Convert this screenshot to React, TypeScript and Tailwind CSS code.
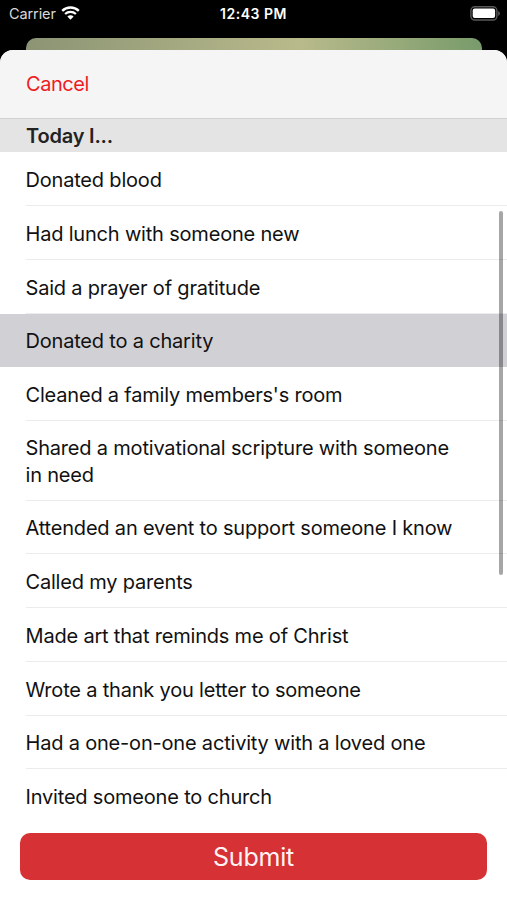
import React from 'react';

const items = [
  { label: 'Donated blood' },
  { label: 'Had lunch with someone new' },
  { label: 'Said a prayer of gratitude' },
  { label: 'Donated to a charity', selected: true },
  { label: "Cleaned a family members's room" },
  { label: 'Shared a motivational scripture with someone in need', tall: true },
  { label: 'Attended an event to support someone I know' },
  { label: 'Called my parents' },
  { label: 'Made art that reminds me of Christ' },
  { label: 'Wrote a thank you letter to someone' },
  { label: 'Had a one-on-one activity with a loved one' },
  { label: 'Invited someone to church', last: true },
];

function WifiIcon() {
  return (
    <svg className="ml-[5px] -mt-px w-[19px] h-[14px]" viewBox="0 0 19 14" fill="none">
      <path d="M1.2 4.9a12 12 0 0 1 16.6 0" stroke="#fff" strokeWidth="2.4" />
      <path d="M4.1 8a7.8 7.8 0 0 1 10.8 0" stroke="#fff" strokeWidth="2.3" />
      <path d="M9.5 13.8 6.4 10.6a4.4 4.4 0 0 1 6.2 0Z" fill="#fff" />
    </svg>
  );
}

function BatteryIcon() {
  return (
    <svg className="w-[31px] h-[15px]" viewBox="0 0 31 15">
      <rect x="0.9" y="0.8" width="26" height="13.2" rx="3.8" fill="none" stroke="#59595b" strokeWidth="1.4" />
      <rect x="2.7" y="2.6" width="22.4" height="9.5" rx="2" fill="#fff" />
      <path d="M28.2 5c1.1.5 1.7 1.4 1.7 2.4s-.6 1.9-1.7 2.4Z" fill="#59595b" />
    </svg>
  );
}

function StatusBar() {
  return (
    <div className="h-[38px] grid grid-cols-3 items-start pt-[4px] text-white">
      <div className="flex items-center h-[19px] pl-[9px] text-[14.5px] tracking-[-0.1px] text-[#d8d8d8]">
        <span>Carrier</span>
        <WifiIcon />
      </div>
      <div className="h-[20px] leading-[20px] text-center text-[14px] font-semibold tracking-[0.5px]">
        12:43 PM
      </div>
      <div className="flex justify-end pt-[2px] pr-[6px]">
        <BatteryIcon />
      </div>
    </div>
  );
}

export default function App() {
  return (
    <div className="relative w-[507px] h-[900px] overflow-hidden bg-black font-['Inter',sans-serif]">
      <StatusBar />

      {/* Edge of the screen behind the sheet */}
      <div className="ml-[26px] mr-[25px] h-[12px] rounded-t-[10px] bg-linear-to-r from-[#8b9474] via-[#b9ba8b] via-60% to-[#789b6b]"></div>

      {/* Sheet */}
      <div className="h-[850px] flex flex-col rounded-t-[13px] bg-white overflow-hidden">
        <div className="shrink-0 h-[68.5px] flex items-center pl-[26px] bg-[#f5f5f5] border-b border-[#d2d2d2]">
          <button className="text-[20px] leading-[26px] tracking-[-0.45px] text-[#ee1c22]">Cancel</button>
        </div>
        <div className="shrink-0 h-[33.9px] flex items-center pl-[26px] pt-[2px] bg-[#e4e4e4] text-[20px] font-semibold tracking-[-0.2px] text-[#222]">
          Today I...
        </div>

        <ul className="text-[20px] leading-[26.5px] tracking-[-0.19px] text-[#111]">
          {items.map((item) => (
            <li
              key={item.label}
              className={`pl-[25.5px] ${item.tall ? 'h-[79.6px]' : 'h-[53.75px]'} ${item.selected ? 'bg-[#d1d0d5]' : ''}`}
            >
              <div
                className={`h-full flex items-center pt-[3px] pr-[50px] border-b ${item.last || item.selected ? 'border-transparent' : 'border-[#ececec]'}`}
              >
                {item.label}
              </div>
            </li>
          ))}
        </ul>

        <button className="shrink-0 mt-[9.3px] mx-[20px] h-[47.5px] pt-[2px] rounded-[10px] bg-[#d63134] text-[25px] tracking-[-0.2px] text-[#fff3f3]">
          Submit
        </button>
      </div>

      {/* Scroll indicator */}
      <div className="absolute right-[4px] top-[211px] w-[4px] h-[364px] rounded-full bg-black/35"></div>
    </div>
  );
}
